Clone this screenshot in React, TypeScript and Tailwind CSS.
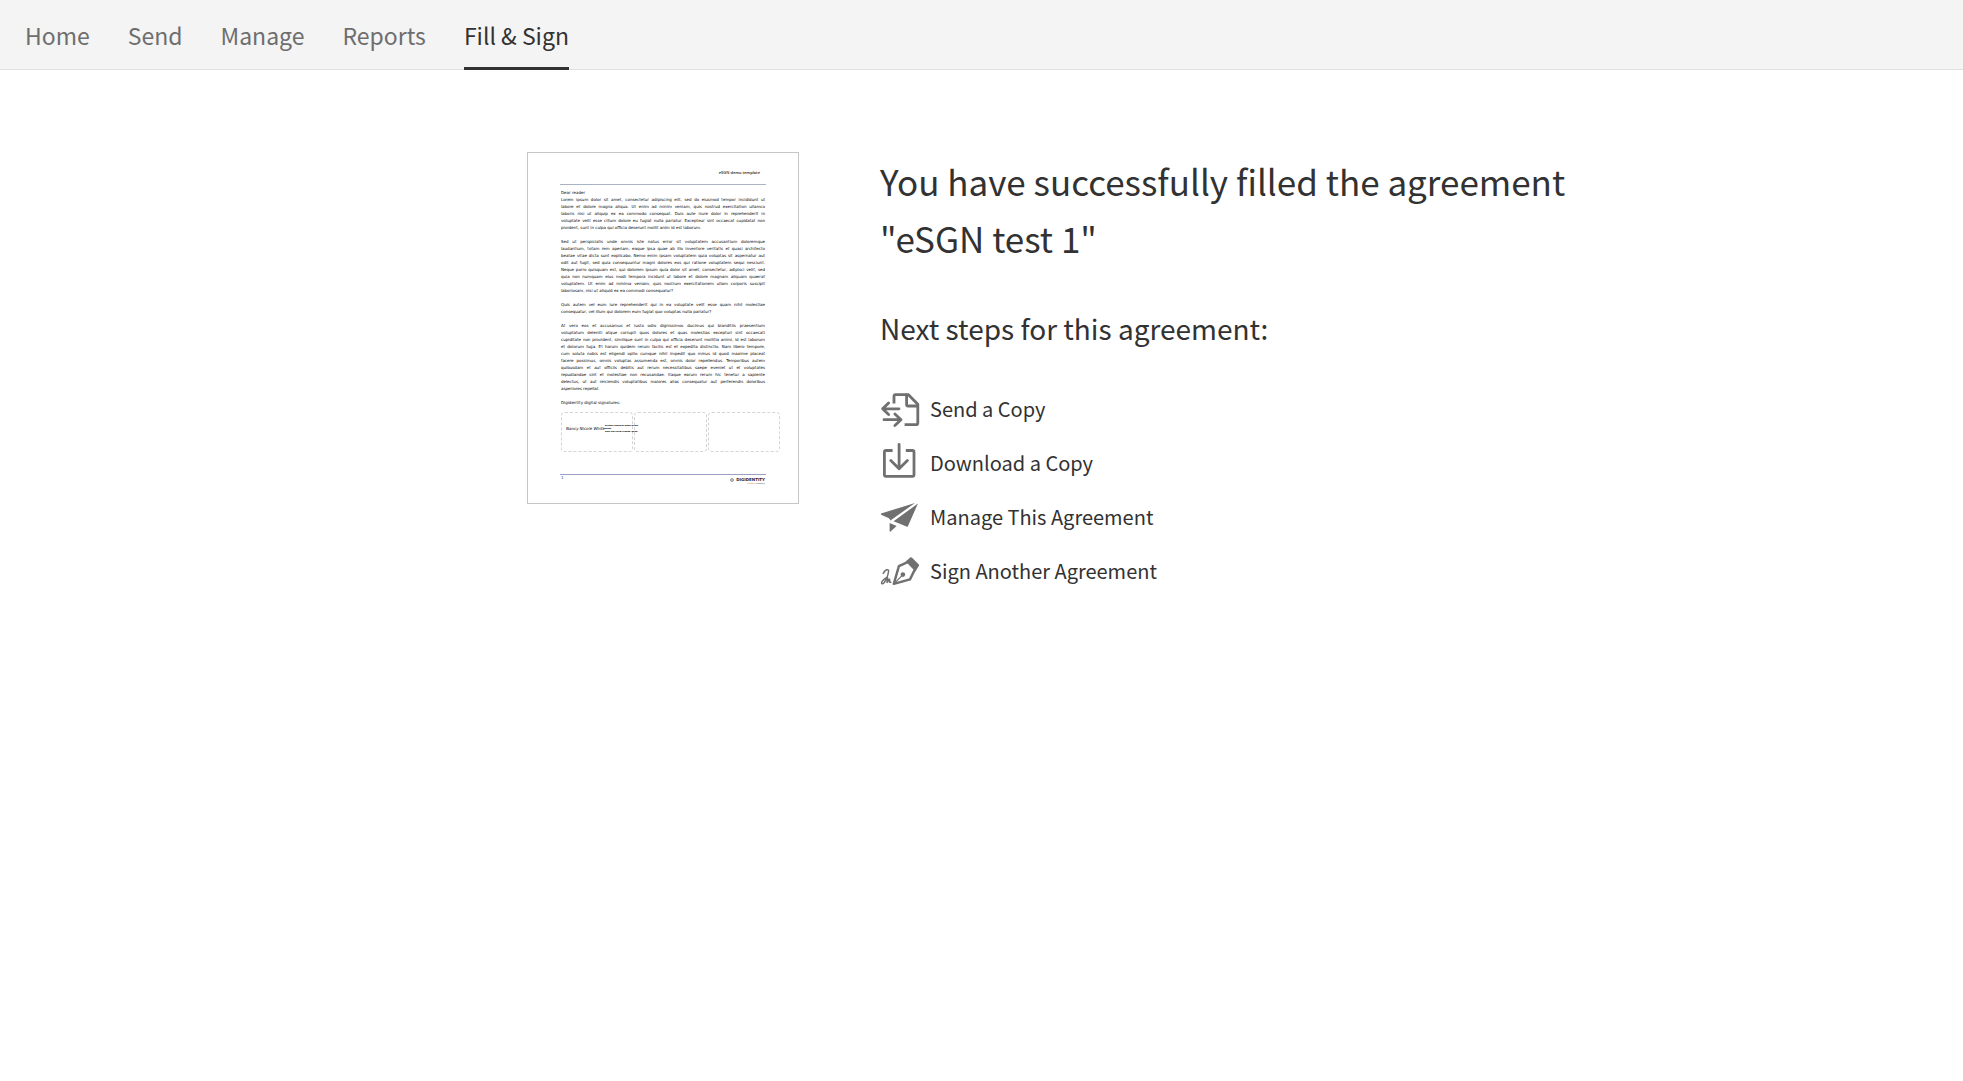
import type { ReactNode } from "react";

const tabs = ["Home", "Send", "Manage", "Reports", "Fill & Sign"];

const paragraphs: string[][] = [
  [
    "Lorem ipsum dolor sit amet, consectetur adipiscing elit, sed do eiusmod tempor incididunt ut",
    "labore et dolore magna aliqua. Ut enim ad minim veniam, quis nostrud exercitation ullamco",
    "laboris nisi ut aliquip ex ea commodo consequat. Duis aute irure dolor in reprehenderit in",
    "voluptate velit esse cillum dolore eu fugiat nulla pariatur. Excepteur sint occaecat cupidatat non",
    "proident, sunt in culpa qui officia deserunt mollit anim id est laborum.",
  ],
  [
    "Sed ut perspiciatis unde omnis iste natus error sit voluptatem accusantium doloremque",
    "laudantium, totam rem aperiam, eaque ipsa quae ab illo inventore veritatis et quasi architecto",
    "beatae vitae dicta sunt explicabo. Nemo enim ipsam voluptatem quia voluptas sit aspernatur aut",
    "odit aut fugit, sed quia consequuntur magni dolores eos qui ratione voluptatem sequi nesciunt.",
    "Neque porro quisquam est, qui dolorem ipsum quia dolor sit amet, consectetur, adipisci velit, sed",
    "quia non numquam eius modi tempora incidunt ut labore et dolore magnam aliquam quaerat",
    "voluptatem. Ut enim ad minima veniam, quis nostrum exercitationem ullam corporis suscipit",
    "laboriosam, nisi ut aliquid ex ea commodi consequatur?",
  ],
  [
    "Quis autem vel eum iure reprehenderit qui in ea voluptate velit esse quam nihil molestiae",
    "consequatur, vel illum qui dolorem eum fugiat quo voluptas nulla pariatur?",
  ],
  [
    "At vero eos et accusamus et iusto odio dignissimos ducimus qui blanditiis praesentium",
    "voluptatum deleniti atque corrupti quos dolores et quas molestias excepturi sint occaecati",
    "cupiditate non provident, similique sunt in culpa qui officia deserunt mollitia animi, id est laborum",
    "et dolorum fuga. Et harum quidem rerum facilis est et expedita distinctio. Nam libero tempore,",
    "cum soluta nobis est eligendi optio cumque nihil impedit quo minus id quod maxime placeat",
    "facere possimus, omnis voluptas assumenda est, omnis dolor repellendus. Temporibus autem",
    "quibusdam et aut officiis debitis aut rerum necessitatibus saepe eveniet ut et voluptates",
    "repudiandae sint et molestiae non recusandae. Itaque earum rerum hic tenetur a sapiente",
    "delectus, ut aut reiciendis voluptatibus maiores alias consequatur aut perferendis doloribus",
    "asperiores repellat.",
  ],
];

function Icon({ children }: { children: ReactNode }) {
  return (
    <svg
      viewBox="0 0 40 40"
      className="size-10 shrink-0 overflow-visible text-[#707070]"
      fill="none"
      stroke="currentColor"
      strokeWidth="2.8"
      strokeLinecap="round"
      strokeLinejoin="round"
      aria-hidden="true"
    >
      {children}
    </svg>
  );
}

const steps: { label: string; icon: ReactNode }[] = [
  {
    label: "Send a Copy",
    icon: (
      <Icon>
        <path d="M14 14.5V7.2Q14 5.6 15.6 5.6H28.2L37.8 15.2V34Q37.8 35.7 36.1 35.7H24.6" strokeLinecap="butt" />
        <path d="M26.6 6V15.6Q26.6 17 28 17H37.5" />
        <path d="M19 19.8H2.6M8.6 13.9L2.6 19.8L8.6 25.6M4 30.7H21M14.9 24.9L21 30.7L14.9 36.5" />
      </Icon>
    ),
  },
  {
    label: "Download a Copy",
    icon: (
      <Icon>
        <path d="M12.6 7.5H6Q4.4 7.5 4.4 9V31.8Q4.4 33.4 6 33.4H32.4Q34 33.4 34 31.8V9Q34 7.5 32.4 7.5H25.8" strokeLinecap="butt" />
        <path d="M19.1 1.4V25.8M10.8 17.4L19.1 25.8L27.4 17.4" />
      </Icon>
    ),
  },
  {
    label: "Manage This Agreement",
    icon: (
      <Icon>
        <g fill="currentColor" stroke="none">
          <path d="M1 16.5L35 6L10.4 23.6Q9.9 21.6 8.5 20.9L1.6 18Q.5 17.4 1 16.5Z" />
          <path d="M38 6.4L27.9 29.2Q27.4 30 26.5 29.6L13.6 24.3Z" />
          <path d="M9.6 26L16.6 29L10.6 34.6Q9.7 35.1 9.6 34Z" />
        </g>
      </Icon>
    ),
  },
  {
    label: "Sign Another Agreement",
    icon: (
      <Icon>
        <path d="M30.6 6.2Q31.2 6 31.8 6.5L38.8 13.4Q39.4 14 39 14.8L35.4 20.6L25.6 10.6Z" fill="currentColor" stroke="none" />
        <path d="M27.6 11.2L18.9 15.2L13.8 32.9L30 28.4L34.4 19.4" strokeWidth="2.4" />
        <path d="M14.4 32.3L22 24.6" strokeWidth="1.2" />
        <circle cx="22.9" cy="23.6" r="2.3" fill="currentColor" stroke="none" />
        <path d="M3.2 22.4C5 18.6 8.8 17.4 8.6 20.2C8.2 24.6 4.6 32.6 2.4 32.8C.2 32.8 2.4 28.6 6.8 26.4C8.8 25.6 6.6 31 7 31.4C7.6 31.6 8.6 27.8 9.6 28.2C10.2 28.6 8.4 32 10.8 31.2" strokeWidth="1.5" />
      </Icon>
    ),
  },
];

function DocumentPreview() {
  return (
    <div className="w-[272px] shrink-0 border border-[#c6c6c6] bg-white px-8 pt-4 pb-[19px] font-['DejaVu_Sans',sans-serif] text-[4px] leading-[7px] text-black">
      <div className="pr-[6px] text-right font-['Open_Sans',sans-serif] font-semibold text-[#222]">eSGN demo template</div>
      <div className="mt-2 h-px bg-[#a9b3c4]" />
      <div className="mt-1 px-px">Dear reader</div>
      <div className="flex flex-col gap-[7px] px-px">
        {paragraphs.map((lines, p) => (
          <div key={p}>
            {lines.map((line, i) => (
              <p
                key={line}
                className={i < lines.length - 1 ? "whitespace-nowrap [text-align-last:justify]" : "whitespace-nowrap"}
              >
                {line}
              </p>
            ))}
          </div>
        ))}
        <p>Digidentity digital signatures:</p>
      </div>
      <div className="-mr-[14px] mt-[6px] grid grid-cols-3 gap-px pl-px">
        <div className="flex h-10 min-w-0 items-center rounded-sm border border-dashed border-[#d4d4d4] pb-2 pl-1">
          <span className="whitespace-nowrap italic">Nancy Nicole White</span>
          <span className="whitespace-nowrap font-['Open_Sans',sans-serif] text-[2px] leading-[3px] font-extrabold text-black">
            Digitally signed by Nancy Nicole
            <br />
            White
            <br />
            Date: 2021.06.08 13:08:08 +02'00'
          </span>
        </div>
        <div className="h-10 rounded-sm border border-dashed border-[#d4d4d4]" />
        <div className="h-10 rounded-sm border border-dashed border-[#d4d4d4]" />
      </div>
      <div className="mt-[22px] h-px bg-[#9c9fc4]" />
      <div className="flex items-start justify-between px-px">
        <span className="leading-[6px] text-[#3a3f9c]">1</span>
        <div className="flex flex-col items-end pt-[2px]">
          <span className="flex items-center gap-[2px] leading-[5px] font-bold text-[#1b1e3c]">
            <svg viewBox="0 0 8 8" className="size-1" fill="none" stroke="#6c7a80" strokeWidth="1.4" aria-hidden="true">
              <circle cx="4" cy="4" r="3" />
              <circle cx="4" cy="4" r="1" />
            </svg>
            DIGIDENTITY
          </span>
          <span className="text-[2px] leading-[2px] text-[#444]">
            <span className="text-[#e0703a]">a Solera</span> company
          </span>
        </div>
      </div>
    </div>
  );
}

export default function App() {
  return (
    <div className="min-h-screen bg-white font-['Noto_Sans_CJK_SC','Open_Sans',sans-serif] text-[#323232]">
      <header className="border-b border-[#e0e0e0] bg-[#f4f4f4]">
        <nav className="-mb-px flex gap-[38px] pl-[25px]" aria-label="Main">
          {tabs.map((tab) => (
            <a
              key={tab}
              href="#"
              aria-current={tab === "Fill & Sign" ? "page" : undefined}
              className="border-b-3 border-transparent pt-[17px] pb-[14px] text-[23px] leading-9 whitespace-nowrap text-[#6e6e6e] aria-[current=page]:border-[#323232] aria-[current=page]:text-[#323232]"
            >
              {tab}
            </a>
          ))}
        </nav>
      </header>

      <main className="mx-auto flex max-w-[1067px] items-start gap-[81px] px-[79px] pt-[82px]">
        <DocumentPreview />
        <section className="min-w-0 grow">
          <h1 className="text-[35px] leading-[57px] whitespace-nowrap">
            You have successfully filled the agreement
            <br />
            "eSGN test 1"
          </h1>
          <h2 className="mt-[38px] text-[28px] leading-[48px]">Next steps for this agreement:</h2>
          <ul className="mt-[37px] flex flex-col gap-[14px]">
            {steps.map(({ label, icon }) => (
              <li key={label} className="flex">
                <a href="#" className="flex items-center gap-[10px] text-[20px] leading-10">
                  {icon}
                  {label}
                </a>
              </li>
            ))}
          </ul>
        </section>
      </main>
    </div>
  );
}
